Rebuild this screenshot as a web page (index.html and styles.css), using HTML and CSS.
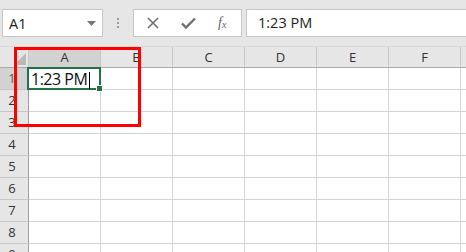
FILE: index.html
```html
<!DOCTYPE html>
<html lang="en">
<head>
    <meta charset="UTF-8">
    <title>Sheet</title>
    <link rel="stylesheet" href="styles.css">
</head>
<body>
    <div id="bar">
        <div id="namebox">
            <span>A1</span>
            <svg class="caret" width="9" height="5" viewBox="0 0 9 5"><path d="M0 0h9L4.5 5z" fill="#777"/></svg>
        </div>
        <div id="grip">
            <i></i><i></i><i></i>
        </div>
        <div id="tools">
            <svg width="12" height="12" viewBox="0 0 12 12"><path d="M1 1L11 11M11 1L1 11" stroke="#6f6f6f" stroke-width="1.6"/></svg>
            <svg width="15" height="12" viewBox="0 0 15 12"><path d="M1 6.5L5 10.5L14 1.5" stroke="#6f6f6f" stroke-width="2.4" fill="none"/></svg>
            <span class="fx">f<sub>x</sub></span>
        </div>
        <div id="formula">1:23 PM</div>
    </div>

    <div id="sheet">
        <div class="corner"><b></b></div>
        <div class="col on">A</div>
        <div class="col">B</div>
        <div class="col">C</div>
        <div class="col">D</div>
        <div class="col">E</div>
        <div class="col">F</div>
        <div class="col"></div>

        <div class="row on">1</div>
        <div class="cell sel">1:23 PM<i class="caret-line"></i><b class="handle"></b></div>
        <div class="cell"></div><div class="cell"></div><div class="cell"></div><div class="cell"></div><div class="cell"></div><div class="cell"></div>

        <div class="row">2</div>
        <div class="cell"></div><div class="cell"></div><div class="cell"></div><div class="cell"></div><div class="cell"></div><div class="cell"></div><div class="cell"></div>
        <div class="row">3</div>
        <div class="cell"></div><div class="cell"></div><div class="cell"></div><div class="cell"></div><div class="cell"></div><div class="cell"></div><div class="cell"></div>
        <div class="row">4</div>
        <div class="cell"></div><div class="cell"></div><div class="cell"></div><div class="cell"></div><div class="cell"></div><div class="cell"></div><div class="cell"></div>
        <div class="row">5</div>
        <div class="cell"></div><div class="cell"></div><div class="cell"></div><div class="cell"></div><div class="cell"></div><div class="cell"></div><div class="cell"></div>
        <div class="row">6</div>
        <div class="cell"></div><div class="cell"></div><div class="cell"></div><div class="cell"></div><div class="cell"></div><div class="cell"></div><div class="cell"></div>
        <div class="row">7</div>
        <div class="cell"></div><div class="cell"></div><div class="cell"></div><div class="cell"></div><div class="cell"></div><div class="cell"></div><div class="cell"></div>
        <div class="row">8</div>
        <div class="cell"></div><div class="cell"></div><div class="cell"></div><div class="cell"></div><div class="cell"></div><div class="cell"></div><div class="cell"></div>
        <div class="row">9</div>
        <div class="cell"></div><div class="cell"></div><div class="cell"></div><div class="cell"></div><div class="cell"></div><div class="cell"></div><div class="cell"></div>
    </div>

    <div id="mark"></div>
</body>
</html>
```

FILE: styles.css
```css
body {
    margin: 0;
    width: 466px;
    height: 252px;
    overflow: hidden;
    background: #e6e6e6;
    font-family: "Open Sans", "Noto Sans", sans-serif;
    position: relative;
}

#bar {
    display: flex;
    align-items: center;
    height: 46px;
    padding-left: 2px;
    box-sizing: border-box;
}
#namebox {
    background: white;
    border: 1px solid #c6c6c6;
    display: flex;
    align-items: center;
    justify-content: space-between;
    padding: 0 6px 0 6px;
    box-sizing: border-box;
    width: 101px;
    height: 28px;
    font-size: 14.5px;
    color: #222;
}
#grip {
    width: 31px;
    display: flex;
    flex-direction: column;
    align-items: center;
    gap: 2px;
    margin-left: -1px;
}
#grip i {
    width: 2px;
    height: 2px;
    background: #9c9c9c;
}
#tools {
    width: 109px;
    height: 28px;
    box-sizing: border-box;
    background: white;
    border: 1px solid #c6c6c6;
    display: flex;
    align-items: center;
    gap: 22px;
    padding-left: 13px;
}
.fx {
    font-family: "Liberation Serif", serif;
    font-style: italic;
    font-size: 14px;
    color: #666;
}
.fx sub {
    font-size: 10px;
    vertical-align: -1px;
}
#formula {
    flex: 1;
    height: 28px;
    margin-left: 4px;
    box-sizing: border-box;
    background: white;
    border: 1px solid #c6c6c6;
    border-right: none;
    font-size: 14.5px;
    color: #222;
    padding-left: 11px;
    line-height: 26px;
}

#sheet {
    display: grid;
    grid-template-columns: 29px repeat(7, 72px);
    grid-template-rows: 21px repeat(9, 22px);
    border-top: 1px solid #d8d8d8;
    font-size: 14px;
}
.corner {
    background: #e6e6e6;
    border-right: 1px solid #c6c6c6;
    border-bottom: 1px solid #ababab;
    position: relative;
}
.corner b {
    position: absolute;
    right: 2px;
    bottom: 2px;
    width: 0;
    height: 0;
    border-left: 12px solid transparent;
    border-bottom: 12px solid #b9b9b9;
}
.col {
    background: #e6e6e6;
    border-right: 1px solid #c6c6c6;
    border-bottom: 1px solid #ababab;
    color: #333;
    text-align: center;
    line-height: 20px;
    font-size: 13px;
}
.row {
    background: #e6e6e6;
    border-right: 1px solid #9e9e9e;
    border-bottom: 1px solid #c6c6c6;
    color: #333;
    text-align: center;
    padding-right: 4px;
    line-height: 21px;
    font-size: 13px;
}
.col.on, .row.on {
    background: #d2d2d2;
}
.row.on {
    color: #4f6b2a;
}
.cell {
    background: white;
    border-right: 1px solid #d4d4d4;
    border-bottom: 1px solid #d4d4d4;
}
.cell.sel {
    position: relative;
    margin: -1px 0 0 -2px;
    border: 2px solid #217346;
    padding-left: 2px;
    line-height: 21px;
    color: #111;
    font-size: 16px;
    letter-spacing: -0.5px;
    z-index: 1;
}
.caret-line {
    display: inline-block;
    width: 1px;
    height: 17px;
    background: #000;
    vertical-align: -4px;
    margin-left: 2px;
}
.handle {
    position: absolute;
    right: -4px;
    bottom: -4px;
    width: 5px;
    height: 5px;
    background: #217346;
    border: 1px solid white;
}

#mark {
    position: absolute;
    left: 14px;
    top: 47px;
    width: 121px;
    height: 74px;
    border: 3px solid #ff0000;
    z-index: 2;
}
```
